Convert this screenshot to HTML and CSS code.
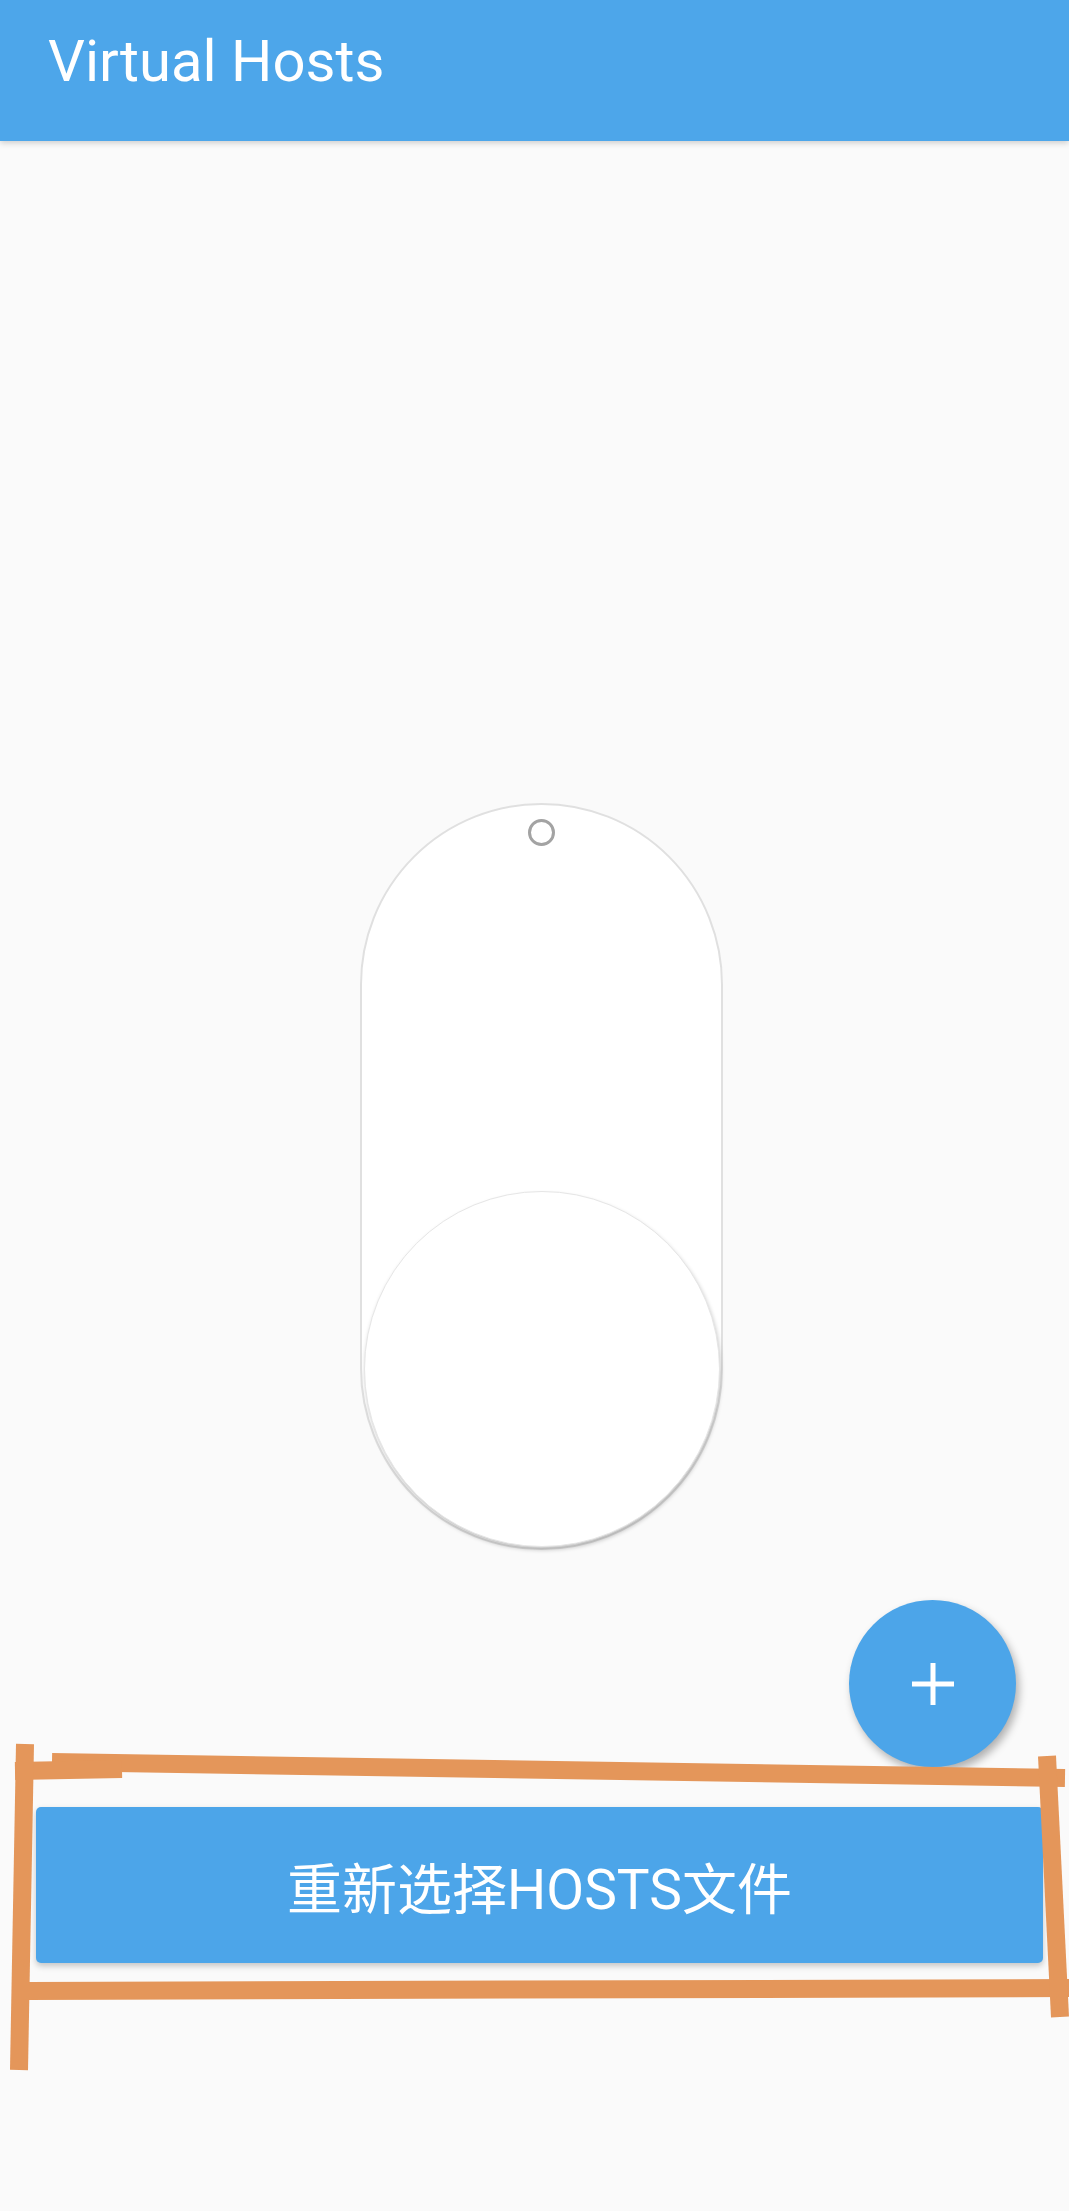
FILE: index.html
```html
<!DOCTYPE html>
<html lang="zh">
<head>
<meta charset="utf-8">
<title>Virtual Hosts</title>
<link rel="stylesheet" href="styles.css">
</head>
<body>
<div class="page">
  <header class="appbar">
    <h1 class="title">Virtual Hosts</h1>
  </header>
  <main class="content">
    <div class="switch">
      <span class="switch-ring"></span>
      <span class="switch-knob"></span>
    </div>
    <button class="fab" aria-label="add">
      <svg width="44" height="44" viewBox="0 0 44 44"><path d="M22 1V43M1 22H43" stroke="#fff" stroke-width="5" fill="none"/></svg>
    </button>
    <button class="primary">重新选择HOSTS文件</button>
  </main>
  <svg class="annotation" width="1069" height="2211" viewBox="0 0 1069 2211">
    <g stroke="#E4965A" stroke-width="18" fill="none" stroke-linecap="butt">
      <path d="M52 1762 L1065 1778"/>
      <path d="M15 1771 L122 1769"/>
      <path d="M25 1744 L19 2070"/>
      <path d="M28 1991 L1069 1988"/>
      <path d="M1047 1756 L1060 2017"/>
    </g>
  </svg>
</div>
</body>
</html>
```
FILE: styles.css
```css
html, body {
  margin: 0;
  padding: 0;
  background: #fafafa;
}
.page {
  position: relative;
  width: 1069px;
  height: 2211px;
  overflow: hidden;
  font-family: "Roboto", "Noto Sans CJK SC", sans-serif;
}
.appbar {
  height: 141px;
  background: #4da6ea;
  box-shadow: 0 2px 6px rgba(0,0,0,0.18);
  display: flex;
  align-items: center;
  padding-left: 48px;
  position: relative;
  z-index: 1;
}
.title {
  margin: 0;
  margin-top: -19px;
  color: #fff;
  font-weight: 400;
  font-size: 58px;
}
.content {
  display: flex;
  flex-direction: column;
  align-items: flex-start;
  padding-top: 662px;
}
.switch {
  box-sizing: border-box;
  width: 363px;
  height: 747px;
  margin-left: 360px;
  border: 2px solid #e0e0e0;
  border-radius: 182px;
  background: #fff;
  display: flex;
  flex-direction: column;
  align-items: center;
  justify-content: space-between;
  padding: 14px 0 1px;
}
.switch-ring {
  width: 27px;
  height: 27px;
  box-sizing: border-box;
  border: 3px solid #a3a3a3;
  border-radius: 50%;
}
.switch-knob {
  width: 356px;
  height: 356px;
  box-sizing: border-box;
  border-radius: 50%;
  background: #fff;
  border: 1px solid #e6e6e6;
  box-shadow: 1px 3px 4px rgba(0,0,0,0.22);
}
.fab {
  position: absolute;
  left: 849px;
  top: 1600px;
  width: 167px;
  height: 167px;
  border-radius: 50%;
  border: none;
  background: #4ca5e9;
  box-shadow: 3px 5px 9px rgba(0,0,0,0.3);
  display: flex;
  align-items: center;
  justify-content: center;
  padding: 0;
}
.fab svg {
  display: block;
}
.primary {
  margin-top: 257px;
  margin-left: 36px;
  width: 1007px;
  height: 156px;
  border: none;
  border-radius: 5px;
  background: #4ca5e9;
  color: #fff;
  font-family: "Roboto", "Noto Sans CJK SC", sans-serif;
  font-size: 55px;
  box-shadow: 0 3px 6px rgba(0,0,0,0.22);
  padding: 0;
}
.annotation {
  position: absolute;
  left: 0;
  top: 0;
  pointer-events: none;
}
```
